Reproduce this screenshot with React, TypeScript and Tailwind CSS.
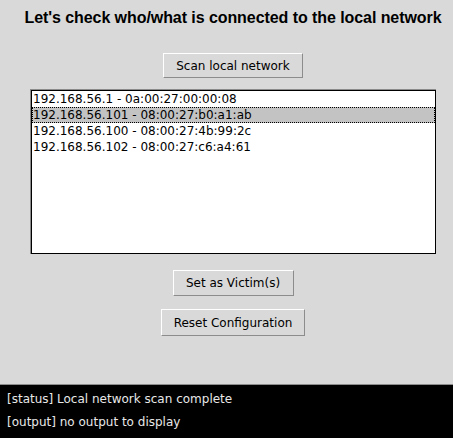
const hosts = [
  "192.168.56.1 - 0a:00:27:00:00:08",
  "192.168.56.101 - 08:00:27:b0:a1:ab",
  "192.168.56.100 - 08:00:27:4b:99:2c",
  "192.168.56.102 - 08:00:27:c6:a4:61",
];

function TkButton({ label, className }: { label: string; className: string }) {
  return (
    <button
      className={
        "flex items-center justify-center bg-[#d9d9d9] border border-t-white border-l-white border-r-[#8c8c8c] border-b-[#8c8c8c] text-[12px] text-black font-['DejaVu_Sans',sans-serif] " +
        className
      }
    >
      {label}
    </button>
  );
}

export default function App() {
  const selected = 1;
  return (
    <div className="w-[453px] h-[438px] bg-[#d9d9d9] flex flex-col overflow-hidden">
      <div className="flex-1 flex flex-col items-center pl-[13px]">
        <h1 className="mt-[9px] text-[16px] leading-[18px] font-bold text-black whitespace-nowrap tracking-[-0.07px] font-['Liberation_Sans',Arial,sans-serif]">
          Let's check who/what is connected to the local network
        </h1>

        <TkButton label="Scan local network" className="mt-[26px] w-[140px] h-[25px]" />

        <div className="mt-[11px] w-[406px] h-[165px] border-t border-l border-[#8a8a8a] border-r-[#d9d9d9] border-b-[#d9d9d9]">
          <div className="w-full h-full bg-white border border-black font-['DejaVu_Sans',sans-serif] text-[12px] text-black">
            {hosts.map((h, i) => (
              <div
                key={h}
                className={
                  i === selected
                    ? "h-[16px] leading-[14px] bg-[#c3c3c3] border border-dotted border-black"
                    : "h-[16px] leading-[16px] pl-px"
                }
              >
                {h}
              </div>
            ))}
          </div>
        </div>

        <TkButton label="Set as Victim(s)" className="mt-[16px] w-[121px] h-[26px]" />
        <TkButton label="Reset Configuration" className="mt-[13px] w-[144px] h-[27px]" />
      </div>

      <div className="h-[54px] bg-black border-t border-[#8c8c8c] pt-[3px] pl-[7px] font-['DejaVu_Sans',sans-serif] text-[12px] leading-[23px] text-[#e8e8e8]">
        <div>[status] Local network scan complete</div>
        <div>[output] no output to display</div>
      </div>
    </div>
  );
}
